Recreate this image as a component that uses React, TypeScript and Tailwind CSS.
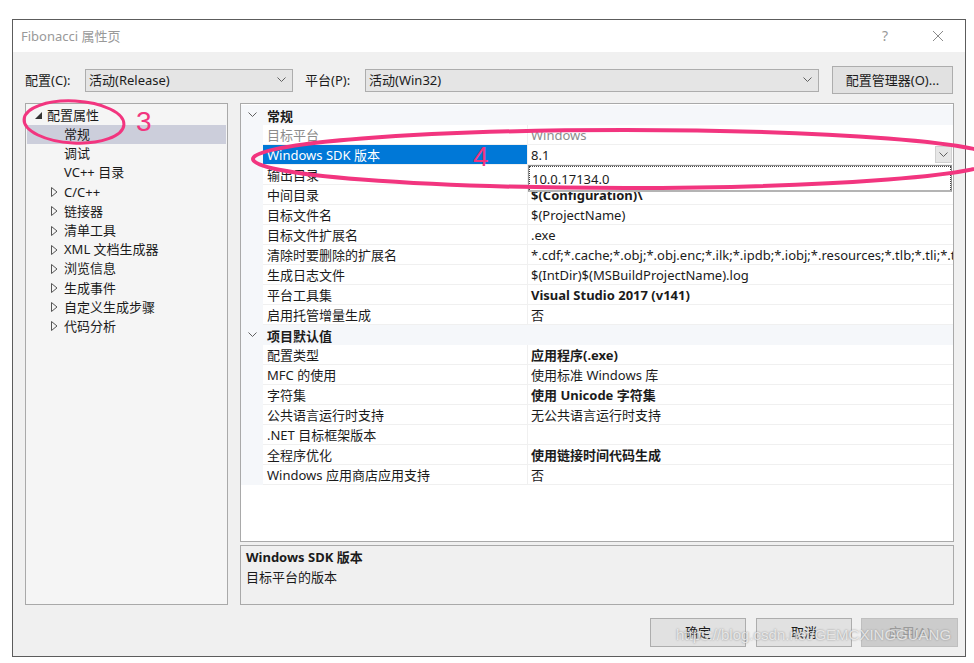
import React from "react";

type Prop = { name: string; value?: string; bold?: boolean; dim?: boolean; selected?: boolean };

const general: Prop[] = [
  { name: "目标平台", value: "Windows", dim: true },
  { name: "Windows SDK 版本", value: "8.1", selected: true },
  { name: "输出目录", value: "$(SolutionDir)$(Configuration)\\", bold: true },
  { name: "中间目录", value: "$(Configuration)\\", bold: true },
  { name: "目标文件名", value: "$(ProjectName)" },
  { name: "目标文件扩展名", value: ".exe" },
  { name: "清除时要删除的扩展名", value: "*.cdf;*.cache;*.obj;*.obj.enc;*.ilk;*.ipdb;*.iobj;*.resources;*.tlb;*.tli;*.tlh;*.tmp;*.rsp" },
  { name: "生成日志文件", value: "$(IntDir)$(MSBuildProjectName).log" },
  { name: "平台工具集", value: "Visual Studio 2017 (v141)", bold: true },
  { name: "启用托管增量生成", value: "否" },
];

const defaults: Prop[] = [
  { name: "配置类型", value: "应用程序(.exe)", bold: true },
  { name: "MFC 的使用", value: "使用标准 Windows 库" },
  { name: "字符集", value: "使用 Unicode 字符集", bold: true },
  { name: "公共语言运行时支持", value: "无公共语言运行时支持" },
  { name: ".NET 目标框架版本", value: "" },
  { name: "全程序优化", value: "使用链接时间代码生成", bold: true },
  { name: "Windows 应用商店应用支持", value: "否" },
];

const collapsedNodes = ["C/C++", "链接器", "清单工具", "XML 文档生成器", "浏览信息", "生成事件", "自定义生成步骤", "代码分析"];

const Chevron = ({ className = "" }: { className?: string }) => (
  <svg width="9" height="6" viewBox="0 0 9 6" className={className}>
    <polyline points="0.5,0.5 4.5,4.5 8.5,0.5" fill="none" stroke="#606060" strokeWidth="1" />
  </svg>
);

const Select = ({ text, width }: { text: string; width: string }) => (
  <div className={`${width} h-[23px] bg-[#e5e5e5] border border-[#adadad] flex items-center pl-[3px] pr-[6px]`}>
    <span className="flex-1 whitespace-nowrap">{text}</span>
    <Chevron />
  </div>
);

const CategoryRow = ({ label }: { label: string }) => (
  <div className="h-[20px] flex items-center bg-[#f5f7fa]">
    <div className="w-[22px] flex justify-center">
      <Chevron />
    </div>
    <span className="pl-[4px] pt-[2px] font-bold">{label}</span>
  </div>
);

const PropRow = ({ p }: { p: Prop }) => (
  <div className="h-[20px] flex">
    <div className="w-[22px] bg-[#f5f7fa]" />
    <div
      className={`w-[265px] flex items-center pl-[4px] pt-[2px] border-b border-r border-[#f0f0f0] whitespace-nowrap overflow-hidden ${
        p.selected ? "bg-[#0078d7] text-white border-[#0078d7]" : p.dim ? "text-[#8c8c8c]" : ""
      }`}
    >
      {p.name}
    </div>
    <div className="flex-1 min-w-0 flex items-center pl-[3px] pt-[2px] border-b border-[#f0f0f0] whitespace-nowrap overflow-hidden relative">
      <span className={`${p.bold ? "font-bold" : ""} ${p.dim ? "text-[#8c8c8c]" : ""}`}>{p.value}</span>
      {p.selected && (
        <div className="absolute right-[1px] top-[1px] w-[17px] h-[17px] bg-[#e6e6e6] border border-[#d0d0d0] flex items-center justify-center">
          <Chevron />
        </div>
      )}
    </div>
  </div>
);

const Button = ({ label, disabled, width }: { label: string; disabled?: boolean; width: string }) => (
  <div
    className={`${width} h-[29px] flex items-center justify-center border ${
      disabled ? "bg-[#cccccc] border-[#bfbfbf] text-[#9a9a9a]" : "bg-[#e1e1e1] border-[#adadad]"
    }`}
  >
    {label}
  </div>
);

export default function App() {
  return (
    <div className="w-[974px] h-[663px] bg-white relative overflow-hidden text-[13px] leading-none text-[#1b1b1b] font-['Noto_Sans','Noto_Sans_CJK_SC',sans-serif]">
      <div className="ml-[12px] mt-[19px] w-[954px] h-[638px] border border-[#5c5c5c] bg-[#f0f0f0] flex flex-col">
        {/* title bar */}
        <div className="h-[32px] bg-white flex items-center pl-[8px] text-[#999999]">
          <span className="flex-1">Fibonacci 属性页</span>
          <span className="mr-[44px] text-[14px]">?</span>
          <svg width="12" height="12" viewBox="0 0 12 12" className="mr-[21px]">
            <path d="M1 1 L11 11 M11 1 L1 11" stroke="#8a8a8a" strokeWidth="1" />
          </svg>
        </div>

        {/* configuration row */}
        <div className="mt-[14px] h-[28px] flex items-center pl-[12px]">
          <span className="w-[60px]">配置(C):</span>
          <Select text="活动(Release)" width="w-[208px]" />
          <span className="ml-[12px] w-[60px]">平台(P):</span>
          <Select text="活动(Win32)" width="w-[454px]" />
          <div className="ml-[13px] w-[121px] h-[28px] bg-[#e1e1e1] border border-[#adadad] flex items-center justify-center">
            配置管理器(O)...
          </div>
        </div>

        {/* panels */}
        <div className="mt-[9px] flex pl-[12px] gap-[12px]">
          <div className="w-[203px] h-[502px] bg-[#f5f5f5] border border-[#a9a9a9] pt-[1px] px-[1px]">
            <div className="h-[20px] flex items-center">
              <svg width="7" height="7" viewBox="0 0 7 7" className="ml-[8px] mr-[5px]">
                <polygon points="7,0 7,7 0,7" fill="#333" />
              </svg>
              <span>配置属性</span>
            </div>
            {["常规", "调试", "VC++ 目录"].map((t, i) => (
              <div key={t} className={`h-[19.2px] flex items-center pl-[37px] ${i === 0 ? "bg-[#cccedb]" : ""}`}>
                {t}
              </div>
            ))}
            {collapsedNodes.map((t) => (
              <div key={t} className="h-[19.2px] flex items-center">
                <svg width="7" height="10" viewBox="0 0 7 10" className="ml-[24px] mr-[6px]">
                  <polygon points="0.5,0.5 6,5 0.5,9.5" fill="none" stroke="#555" strokeWidth="1" />
                </svg>
                <span>{t}</span>
              </div>
            ))}
          </div>

          <div className="w-[714px] flex flex-col gap-[3px]">
            <div className="h-[439px] bg-white border border-[#a9a9a9] pt-[1px] relative overflow-hidden">
              <CategoryRow label="常规" />
              {general.map((p) => (
                <PropRow key={p.name} p={p} />
              ))}
              <CategoryRow label="项目默认值" />
              {defaults.map((p) => (
                <PropRow key={p.name} p={p} />
              ))}
              {/* open dropdown list */}
              <div className="absolute left-[287px] top-[61px] w-[424px] h-[27px] bg-white border border-[#8f8f8f] border-b-2 border-b-[#b4b4b4]">
                <div className="h-full border border-dotted border-[#444] border-b-0 flex items-center pl-[2px] pt-[1px]">
                  10.0.17134.0
                </div>
              </div>
            </div>
            <div className="h-[60px] bg-[#f0f0f0] border border-[#a9a9a9] pl-[5px] pt-[5px] flex flex-col gap-[7px]">
              <span className="font-bold">Windows SDK 版本</span>
              <span>目标平台的版本</span>
            </div>
          </div>
        </div>

        {/* buttons */}
        <div className="mt-[13px] flex justify-end pr-[7px]">
          <Button label="确定" width="w-[96px]" />
          <div className="ml-[10px]">
            <Button label="取消" width="w-[96px]" />
          </div>
          <div className="ml-[9px]">
            <Button label="应用(A)" width="w-[97px]" disabled />
          </div>
        </div>
      </div>

      {/* annotations */}
      <svg width="974" height="663" className="absolute left-0 top-0 pointer-events-none">
        <ellipse cx="74" cy="122" rx="50" ry="21" fill="none" stroke="#f2357f" strokeWidth="3" transform="rotate(3 74 122)" />
        <ellipse cx="625" cy="159" rx="372" ry="29" fill="none" stroke="#f2357f" strokeWidth="4" />
      </svg>
      <span className="absolute left-[136px] top-[108px] text-[28px] text-[#f2357f] font-['Liberation_Sans',sans-serif] font-light">3</span>
      <span className="absolute left-[473px] top-[143px] text-[28px] text-[#f2357f] font-['Liberation_Sans',sans-serif] font-light">4</span>

      {/* watermark */}
      <span className="absolute left-[676px] top-[627px] text-[15px] text-white/70 font-['Liberation_Sans',sans-serif] [text-shadow:0_0_2px_#888]">
        https://blog.csdn.net/GEMCXINGGUANG
      </span>
    </div>
  );
}
